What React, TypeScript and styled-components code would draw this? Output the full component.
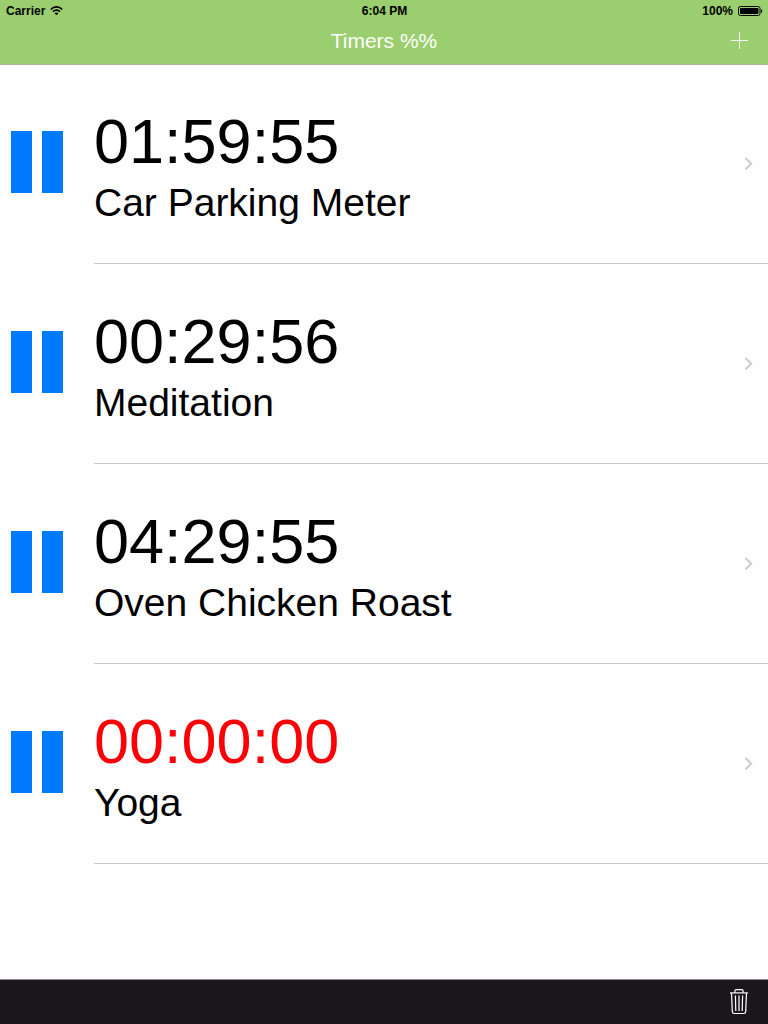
import React from "react";
import styled, { createGlobalStyle } from "styled-components";

const GlobalStyle = createGlobalStyle`
  * { box-sizing: border-box; }
  body {
    margin: 0;
    background: #fefefe;
    color: #000;
    font-family: "Liberation Sans", Arial, sans-serif;
  }
`;

const Page = styled.div`
  display: flex;
  flex-direction: column;
  min-height: 100vh;
`;

const Header = styled.header`
  position: relative;
  background: #9bce6e;
  box-shadow: 0 1px 0 #a9b79c;
`;

const StatusBar = styled.div`
  display: grid;
  grid-template-columns: 1fr auto 1fr;
  align-items: center;
  height: 20px;
  padding: 2px 5px 0 6px;
  font-size: 12px;
  font-weight: bold;
  line-height: 14px;
`;

const StatusGroup = styled.div<{ $end?: boolean }>`
  display: flex;
  align-items: center;
  gap: 5px;
  justify-content: ${(p) => (p.$end ? "flex-end" : "flex-start")};
`;

const NavBar = styled.div`
  display: grid;
  grid-template-columns: 1fr auto 1fr;
  align-items: center;
  height: 44px;
  padding: 0 20px;
`;

const Title = styled.h1`
  grid-column: 2;
  margin: 0;
  color: #fff;
  font-size: 21px;
  font-weight: normal;
  line-height: 24px;
  padding-bottom: 2px;
`;

const IconButton = styled.button`
  display: flex;
  justify-self: end;
  padding: 0;
  border: 0;
  background: none;
  color: #fff;
  cursor: pointer;
`;

const NavButton = styled(IconButton)`
  padding-bottom: 4px;
`;

const TimerList = styled.ul`
  flex: 1;
  margin: 0;
  padding: 0;
  list-style: none;
`;

const Row = styled.li`
  display: flex;
  height: 200px;
`;

const PauseButton = styled.button`
  display: flex;
  align-items: center;
  gap: 10px;
  width: 94px;
  padding: 0 0 4px 11px;
  border: 0;
  background: none;
  cursor: pointer;
`;

const PauseBar = styled.span`
  width: 21px;
  height: 62px;
  background: #007aff;
`;

const RowLink = styled.a`
  display: flex;
  flex: 1;
  align-items: center;
  justify-content: space-between;
  min-width: 0;
  padding-right: 15px;
  border-bottom: 1px solid #c8c7cc;
  color: inherit;
  text-decoration: none;
`;

const Labels = styled.span`
  display: flex;
  flex-direction: column;
  gap: 3px;
  padding-top: 4px;
`;

const Time = styled.span<{ $done: boolean }>`
  color: ${(p) => (p.$done ? "#fb0006" : "#000")};
  font-size: 63px;
  line-height: 72px;
`;

const Name = styled.span`
  font-size: 39px;
  line-height: 46px;
`;

const Toolbar = styled.footer`
  display: flex;
  align-items: center;
  justify-content: flex-end;
  height: 45px;
  padding: 0 20px;
  border-top: 1px solid #8c8c8c;
  background: #19171a;
`;

const timers = [
  { time: "01:59:55", name: "Car Parking Meter", done: false },
  { time: "00:29:56", name: "Meditation", done: false },
  { time: "04:29:55", name: "Oven Chicken Roast", done: false },
  { time: "00:00:00", name: "Yoga", done: true },
];

const WifiIcon = () => (
  <svg width="13" height="10" viewBox="0 0 13 10" fill="none" stroke="#000" strokeWidth="1.6" aria-hidden="true">
    <path d="M.8 3.6C4-.1 9-.1 12.2 3.6" />
    <path d="M3 5.8c2-2.2 5-2.2 7 0" />
    <path d="M6.5 9.3 4.6 7.3c1.1-1 2.7-1 3.8 0z" fill="#000" stroke="none" />
  </svg>
);

const BatteryIcon = () => (
  <svg width="25" height="10" viewBox="0 0 25 10" aria-hidden="true">
    <rect x=".5" y=".5" width="21.5" height="9" rx="1.8" fill="none" stroke="#000" />
    <rect x="2" y="2" width="18.5" height="6" rx=".8" />
    <path d="M23 3.2c1.6.2 1.6 3.4 0 3.6z" />
  </svg>
);

const PlusIcon = () => (
  <svg width="17" height="17" viewBox="0 0 17 17" stroke="#fff" aria-hidden="true">
    <path d="M8.5 0v17M0 8.5h17" />
  </svg>
);

const ChevronIcon = () => (
  <svg width="9" height="14" viewBox="0 0 9 14" fill="none" stroke="#c7c7cc" strokeWidth="1.8" aria-hidden="true">
    <path d="m1.5 1 5.7 5.7-5.7 5.7" />
  </svg>
);

const TrashIcon = () => (
  <svg width="18" height="26" viewBox="0 0 18 26" fill="none" stroke="#fff" strokeWidth="1.2" aria-hidden="true">
    <path d="M0 3.9h18" />
    <path d="M4.9 3.7V2c0-.9.4-1.3 1.3-1.3h5.6c.9 0 1.3.4 1.3 1.3v1.7" />
    <path d="m1.5 4 .8 18.6c.1 1.4.6 1.9 1.9 1.9h9.6c1.3 0 1.8-.5 1.9-1.9L16.500 4" />
    <path d="m5.400 6.500.4 15.500M9 6.500v15.500M12.600 6.500l-.4 15.500" />
  </svg>
);

export default function App() {
  return (
    <Page>
      <GlobalStyle />
      <Header>
        <StatusBar>
          <StatusGroup>
            <span>Carrier</span>
            <WifiIcon />
          </StatusGroup>
          <span>6:04 PM</span>
          <StatusGroup $end>
            <span>100%</span>
            <BatteryIcon />
          </StatusGroup>
        </StatusBar>
        <NavBar>
          <Title>Timers %%</Title>
          <NavButton type="button" aria-label="Add timer">
            <PlusIcon />
          </NavButton>
        </NavBar>
      </Header>
      <TimerList>
        {timers.map((t) => (
          <Row key={t.name}>
            <PauseButton type="button" aria-label={`Pause ${t.name}`}>
              <PauseBar />
              <PauseBar />
            </PauseButton>
            <RowLink href="#">
              <Labels>
                <Time $done={t.done}>{t.time}</Time>
                <Name>{t.name}</Name>
              </Labels>
              <ChevronIcon />
            </RowLink>
          </Row>
        ))}
      </TimerList>
      <Toolbar>
        <IconButton type="button" aria-label="Delete timers">
          <TrashIcon />
        </IconButton>
      </Toolbar>
    </Page>
  );
}
